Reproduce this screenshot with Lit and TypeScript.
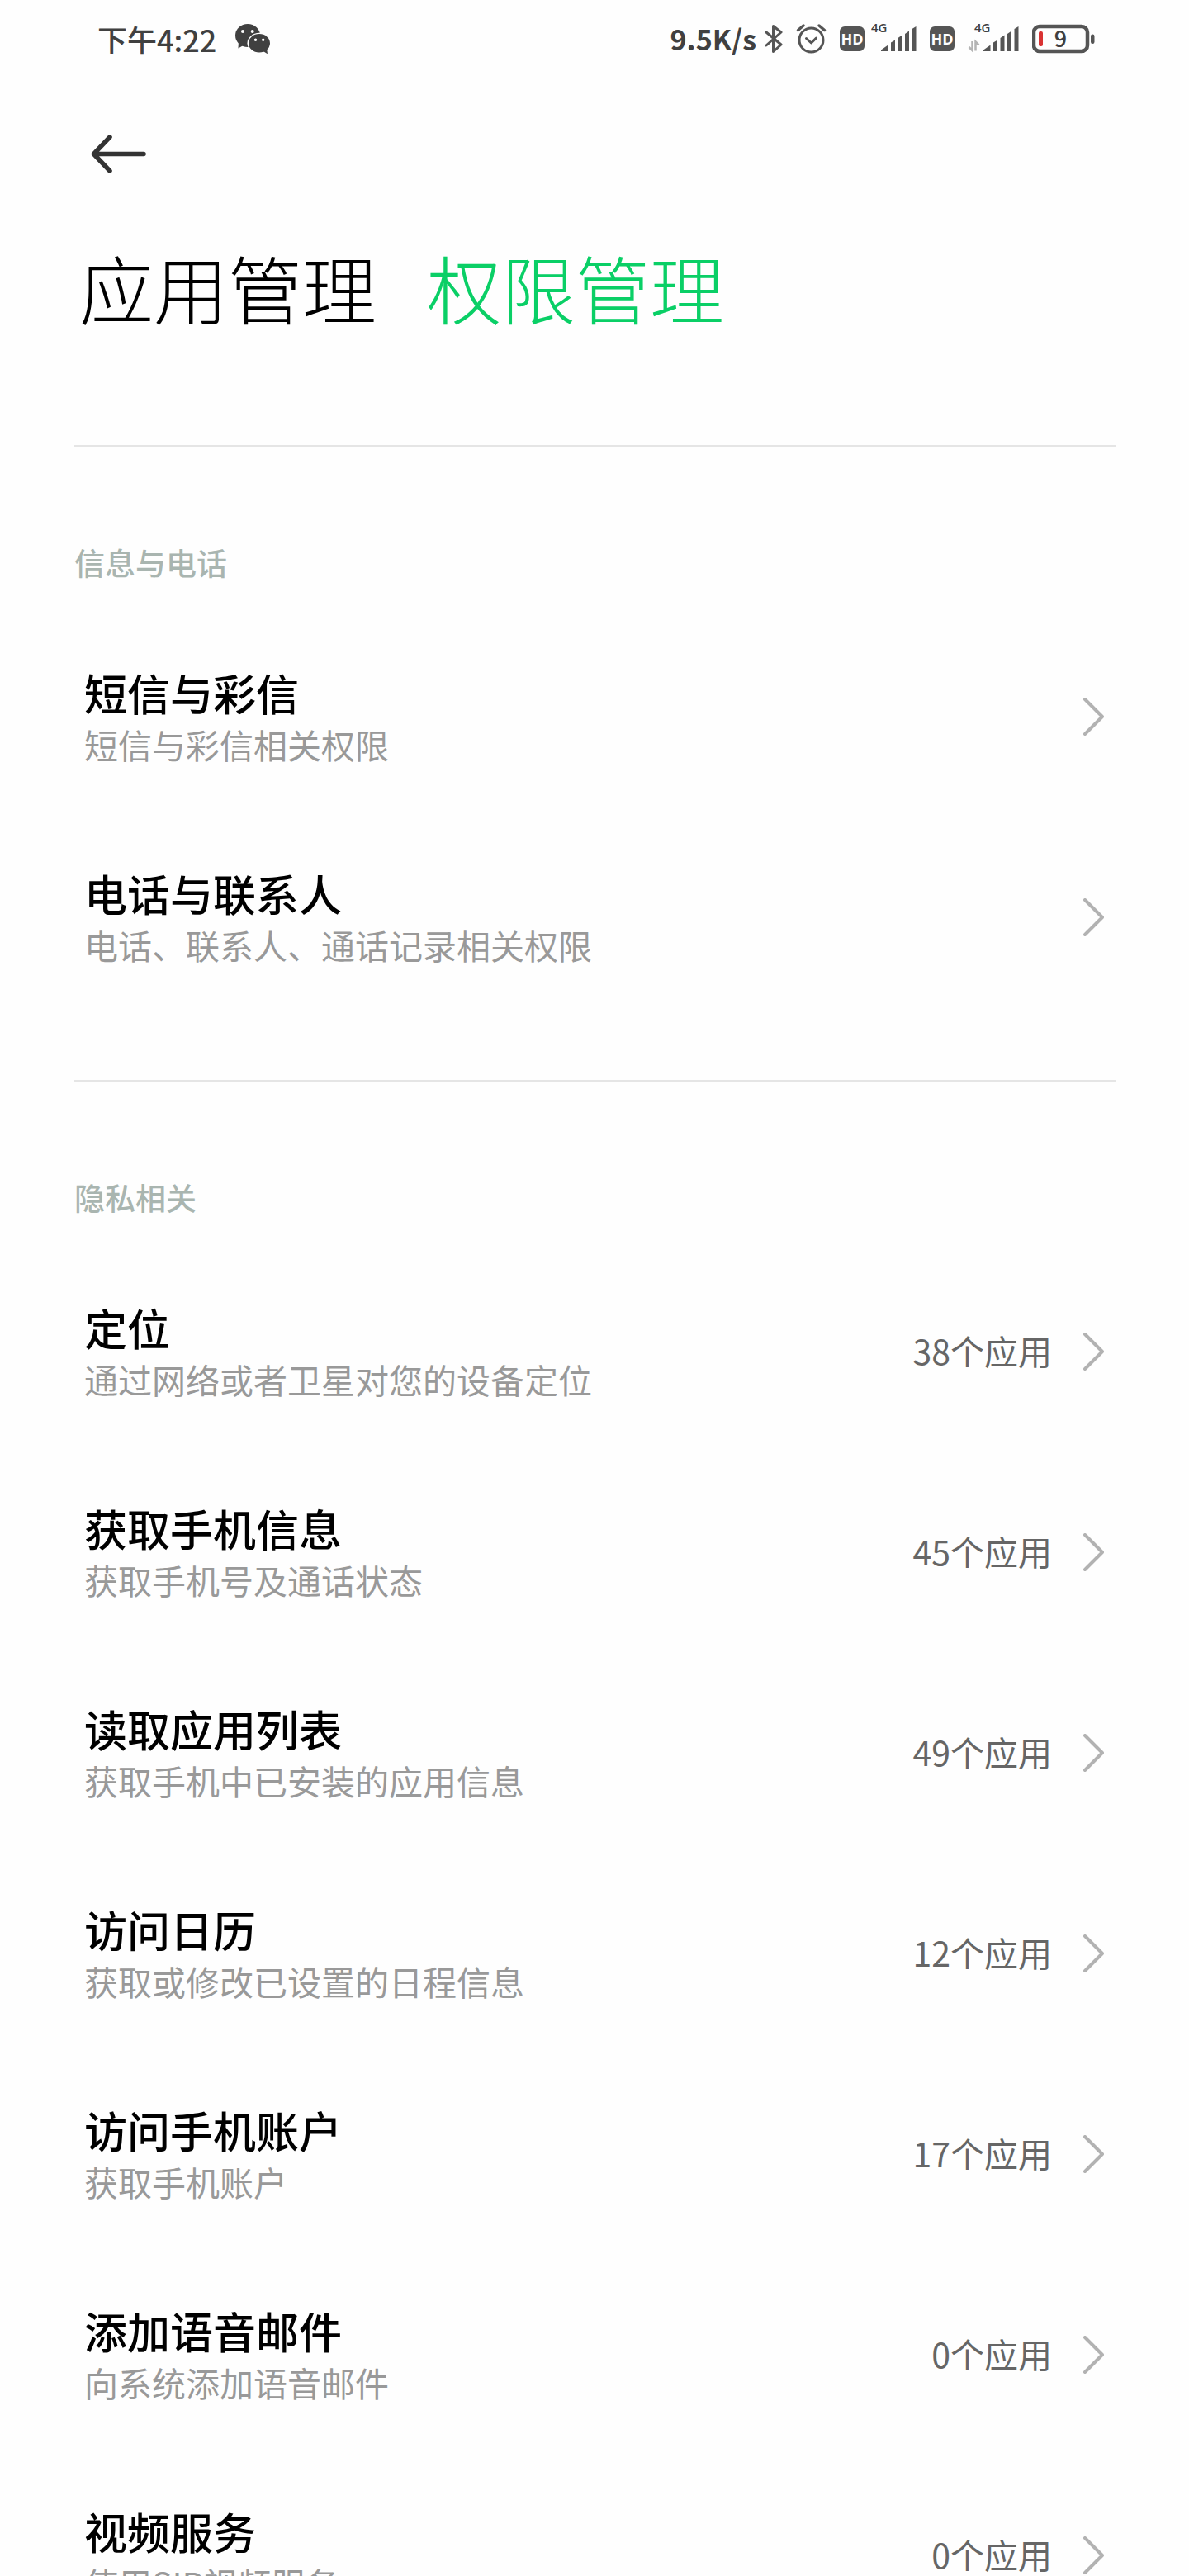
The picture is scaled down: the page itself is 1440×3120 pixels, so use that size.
import { LitElement, html, css, svg, nothing } from "lit";
import { customElement, property } from "lit/decorators.js";

interface Permission {
  name: string;
  detail: string;
  apps?: number;
}

interface Group {
  label: string;
  items: Permission[];
}

const GROUPS: Group[] = [
  {
    label: "信息与电话",
    items: [
      { name: "短信与彩信", detail: "短信与彩信相关权限" },
      { name: "电话与联系人", detail: "电话、联系人、通话记录相关权限" },
    ],
  },
  {
    label: "隐私相关",
    items: [
      { name: "定位", detail: "通过网络或者卫星对您的设备定位", apps: 38 },
      { name: "获取手机信息", detail: "获取手机号及通话状态", apps: 45 },
      { name: "读取应用列表", detail: "获取手机中已安装的应用信息", apps: 49 },
      { name: "访问日历", detail: "获取或修改已设置的日程信息", apps: 12 },
      { name: "访问手机账户", detail: "获取手机账户", apps: 17 },
      { name: "添加语音邮件", detail: "向系统添加语音邮件", apps: 0 },
      { name: "视频服务", detail: "使用SIP视频服务", apps: 0 },
    ],
  },
];

// Five rising bars with slanted tops, 43 wide and 30 high.
const signalBars = (x: number) => svg`
  <g transform="translate(${x} 4)" fill="#555">
    <path d="M0 30v-1.500L8.500 22.500V30z"/>
    <path d="M12 30V19.500l5-3V30z"/>
    <path d="M20.500 30V14l5-3.500V30z"/>
    <path d="M29 30V9l5-3.500V30z"/>
    <path d="M37.500 30V3l5-3V30z"/>
  </g>`;

@customElement("status-bar")
export class StatusBar extends LitElement {
  static styles = css`
    :host {
      display: block;
    }
    .bar {
      display: flex;
      align-items: center;
      justify-content: space-between;
      height: 78px;
      padding: 8px 114px 0 118px;
      color: #404040;
      font-size: 36px;
      font-weight: 500;
      line-height: 50px;
    }
    .side {
      display: flex;
      align-items: center;
      gap: 16px;
    }
    .clock {
      gap: 22px;
    }
    .speed {
      display: flex;
      align-items: center;
      gap: 10px;
      font-weight: 700;
      font-size: 34px;
    }
    .sim {
      display: flex;
      align-items: center;
      gap: 8px;
    }
    .hd {
      width: 30px;
      height: 30px;
      border-radius: 6px;
      background: #555;
      color: #fff;
      font: 700 18px/31px "Open Sans", "Noto Sans", sans-serif;
      text-align: center;
    }
    .net {
      font: 600 15px "Open Sans", "Noto Sans", sans-serif;
    }
    .charge {
      font: 500 27px "Noto Sans CJK SC", sans-serif;
    }
    svg {
      display: block;
      flex: none;
    }
  `;

  render() {
    return html`
      <div class="bar">
        <div class="side clock">
          <span>下午4:22</span>
          <svg width="44" height="38" viewBox="284 28 44 38" aria-hidden="true">
            <path fill="#404040" d="M289 49l-.5 9.500 7-4z" />
            <ellipse cx="300" cy="43" rx="15" ry="14" fill="#404040" />
            <circle cx="294" cy="38" r="2" fill="#fefefe" />
            <circle cx="305.700" cy="38" r="2" fill="#fefefe" />
            <ellipse cx="314" cy="52.300" rx="14.500" ry="12.500" fill="#fefefe" />
            <path fill="#404040" d="M317 61l7 4.200-1-7z" />
            <ellipse cx="314" cy="52.300" rx="13" ry="11.200" fill="#404040" />
            <circle cx="309.500" cy="48.300" r="1.700" fill="#fefefe" />
            <circle cx="318.700" cy="48.300" r="1.700" fill="#fefefe" />
          </svg>
        </div>
        <div class="side">
          <div class="speed">
            <span>9.5K/s</span>
            <svg width="22" height="38" viewBox="0 0 22 38" aria-hidden="true">
              <path d="M2 11l18 15-9.500 8.500v-31L20 11 2 27" fill="none" stroke="#555"
                stroke-width="3" stroke-linejoin="round" stroke-linecap="round" />
            </svg>
          </div>
          <svg width="37" height="38" viewBox="0 0 37 38" aria-hidden="true">
            <g fill="none" stroke="#555" stroke-width="3" stroke-linecap="round" stroke-linejoin="round">
              <circle cx="18.500" cy="20.500" r="14.500" />
              <path d="M12.500 18.500l6 5.500 6-6" />
              <path stroke-width="3.500" d="M2.500 8.500L9 3M34.500 8.500L28 3" />
            </g>
          </svg>
          <div class="sim">
            <span class="hd">HD</span>
            <svg width="55" height="52" viewBox="0 -7 55 52" aria-hidden="true">
              <text class="net" x="0" y="11" fill="#404040">4G</text>
              ${signalBars(12)}
            </svg>
          </div>
          <div class="sim">
            <span class="hd">HD</span>
            <svg width="70" height="52" viewBox="0 -7 70 52" aria-hidden="true">
              <text class="net" x="16" y="11" fill="#404040">4G</text>
              <path d="M13.500 22v11l-4-4M17.500 33.500v-11l4 4" fill="none" stroke="#b4b4b4" stroke-width="2.500" />
              ${signalBars(27)}
            </svg>
          </div>
          <svg width="76" height="48" viewBox="0 -7 76 48" role="img" aria-label="电量 9">
            <rect x="2" y="2" width="65" height="30" rx="7" fill="none" stroke="#555" stroke-width="4.500" />
            <rect x="71" y="11.500" width="4.500" height="11.500" rx="2.200" fill="#555" />
            <rect x="8" y="8" width="5" height="18" rx="2" fill="#d93232" />
            <text class="charge" x="34.500" y="27" fill="#404040" text-anchor="middle">9</text>
          </svg>
        </div>
      </div>
    `;
  }
}

@customElement("permission-row")
export class PermissionRow extends LitElement {
  @property({ attribute: false }) item!: Permission;

  static styles = css`
    :host {
      display: block;
    }
    .row {
      display: flex;
      align-items: center;
      gap: 38px;
      width: 100%;
      min-height: 243px;
      padding: 0 14px 0 12px;
      border: 0;
      background: none;
      box-sizing: border-box;
      font: inherit;
      text-align: left;
      cursor: pointer;
    }
    .text {
      display: flex;
      flex: 1;
      flex-direction: column;
      min-width: 0;
    }
    .name {
      color: #000;
      font-size: 52px;
      font-weight: 500;
      line-height: 66px;
    }
    .detail {
      color: #999;
      font-size: 41px;
      line-height: 58px;
    }
    .apps {
      padding-bottom: 4px;
      color: #666;
      font-size: 41px;
      line-height: 58px;
      white-space: nowrap;
    }
    .chevron {
      display: block;
      flex: none;
    }
  `;

  render() {
    const { name, detail, apps } = this.item;
    return html`
      <button class="row" type="button">
        <span class="text">
          <span class="name">${name}</span>
          <span class="detail">${detail}</span>
        </span>
        ${apps === undefined ? nothing : html`<span class="apps">${apps}个应用</span>`}
        <svg class="chevron" width="25" height="46" viewBox="0 0 25 46" aria-hidden="true">
          <path d="M2 2l21 21L2 44" fill="none" stroke="#b2b2b2" stroke-width="4"
            stroke-linecap="round" stroke-linejoin="round" />
        </svg>
      </button>
    `;
  }
}

@customElement("app-root")
export class AppRoot extends LitElement {
  static styles = css`
    :host {
      display: block;
      height: 100vh;
      overflow-y: auto;
      scrollbar-width: none;
      background: #fefefe;
      font-family: "Noto Sans CJK SC", "Noto Sans", sans-serif;
    }
    .toolbar {
      display: flex;
      align-items: center;
      height: 201px;
      padding: 0 110px;
    }
    .back {
      display: block;
      padding: 0;
      border: 0;
      background: none;
      cursor: pointer;
    }
    .arrow {
      display: block;
    }
    .tabs {
      display: flex;
      gap: 61px;
      padding: 0 96px 132px;
    }
    .tab {
      color: #000;
      font-size: 90px;
      font-weight: 300;
      line-height: 120px;
      text-decoration: none;
    }
    .current {
      color: #0acf66;
    }
    .group {
      margin: 0 89px 0 90px;
      padding-bottom: 76px;
      border-top: 2px solid #e5e5e5;
    }
    .label {
      margin: 0;
      padding: 115px 0 40px;
      color: #a9b5b0;
      font-size: 37px;
      font-weight: 500;
      line-height: 50px;
    }
  `;

  render() {
    return html`
      <status-bar></status-bar>
      <header>
        <div class="toolbar">
          <button class="back" type="button" aria-label="返回">
            <svg class="arrow" width="67" height="47" viewBox="0 0 67 47" aria-hidden="true">
              <path d="M23 3L3.500 23.500 23 44M4 23.500h60" fill="none" stroke="#333"
                stroke-width="5.500" stroke-linecap="round" stroke-linejoin="round" />
            </svg>
          </button>
        </div>
        <nav class="tabs">
          <a class="tab" href="#apps">应用管理</a>
          <a class="tab current" href="#permissions" aria-current="page">权限管理</a>
        </nav>
      </header>
      <main>
        ${GROUPS.map(
          (group) => html`
            <section class="group">
              <h2 class="label">${group.label}</h2>
              ${group.items.map((item) => html`<permission-row .item=${item}></permission-row>`)}
            </section>
          `,
        )}
      </main>
    `;
  }
}
